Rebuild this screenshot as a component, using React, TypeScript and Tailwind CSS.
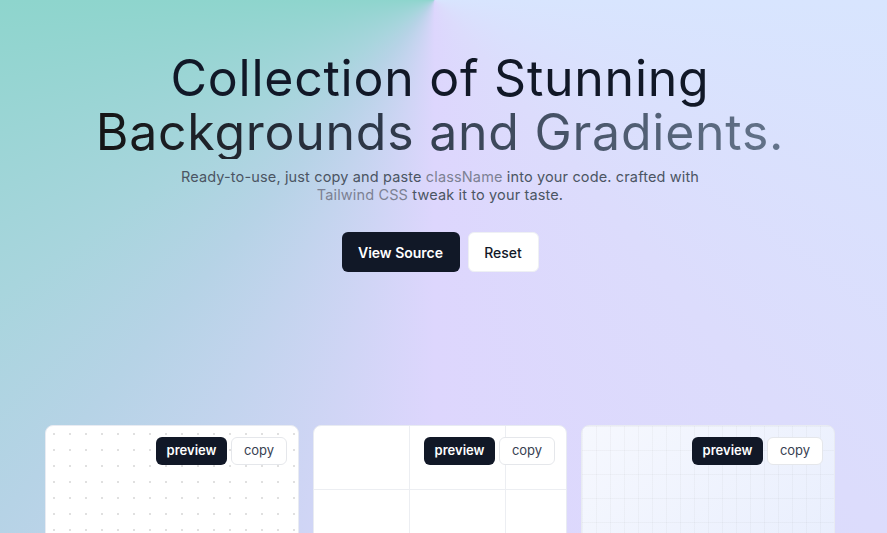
import React from "react";

const font = { fontFamily: "Inter, 'Noto Sans', sans-serif" };

function CardButtons() {
  return (
    <div className="flex justify-end gap-1 pr-[11px] pt-[11px]">
      <button className="flex h-7 w-[71px] items-center justify-center rounded-md bg-[#111827] text-[13px] font-semibold text-white">
        preview
      </button>
      <button className="flex h-7 w-[56px] items-center justify-center rounded-md border border-[#e5e7eb] bg-white text-[13px] text-[#374151]">
        copy
      </button>
    </div>
  );
}

export default function App() {
  return (
    <div
      style={font}
      className="relative h-[533px] w-full overflow-hidden bg-[conic-gradient(at_49%_0%,#d8e6fe_0deg,#d8e5fe_90deg,#dcdcfc_140deg,#ddd6fd_180deg,#b6d3e6_220deg,#a8d5dd_236deg,#8ed5cd_270deg,#84d5c6_360deg)]"
    >
      <div className="w-[880px]">
        <div className="flex flex-col items-center pt-[51px]">
          <h1 className="text-center text-[50px] font-normal leading-[54px] tracking-[0.015em]">
            <span className="block text-[#111827]">Collection of Stunning</span>
            <span className="inline-block bg-[linear-gradient(to_right,#141414,#2d3748_40%,#64748b)] bg-clip-text text-transparent">
              Backgrounds and Gradients.
            </span>
          </h1>
          <p className="mt-[9px] text-center text-[14.5px] leading-[18px] tracking-[0.01em] text-[#4b5563]">
            Ready-to-use, just copy and paste <span className="text-[#7c8193]">className</span> into your
            code. crafted with
            <br />
            <span className="text-[#7c8193]">Tailwind CSS</span> tweak it to your taste.
          </p>
          <div className="mt-[28px] flex gap-2">
            <button className="flex h-10 w-[118px] items-center justify-center rounded-md bg-[#111827] text-[14px] font-semibold text-white">
              View Source
            </button>
            <button className="flex h-10 w-[71px] items-center justify-center rounded-md border border-[#eef0f4] bg-white text-[14px] font-medium text-[#111827]">
              Reset
            </button>
          </div>
        </div>

        <div className="mt-[153px] flex justify-center gap-[14px]">
          <div className="h-[260px] w-[254px] overflow-hidden rounded-lg border border-[#e8ebf2] bg-white bg-[radial-gradient(#e0e0e0_1px,transparent_1.2px)] bg-[size:16px_16px] bg-[position:0px_0px]">
            <CardButtons />
          </div>
          <div className="h-[260px] w-[254px] overflow-hidden rounded-lg border border-[#e8ebf2] bg-white bg-[linear-gradient(to_right,#eceef2_1px,transparent_1px),linear-gradient(to_bottom,#eceef2_1px,transparent_1px)] bg-[size:96px_64px] bg-[position:-1px_-1px]">
            <CardButtons />
          </div>
          <div className="h-[260px] w-[254px] overflow-hidden rounded-lg border border-[#e8ebf2] bg-[linear-gradient(to_right,#8080800f_1px,transparent_1px),linear-gradient(to_bottom,#8080800f_1px,transparent_1px),linear-gradient(135deg,#f6f8fe,#e4ebfd)] bg-[size:14px_24px,14px_24px,100%_100%]">
            <CardButtons />
          </div>
        </div>
      </div>
    </div>
  );
}
